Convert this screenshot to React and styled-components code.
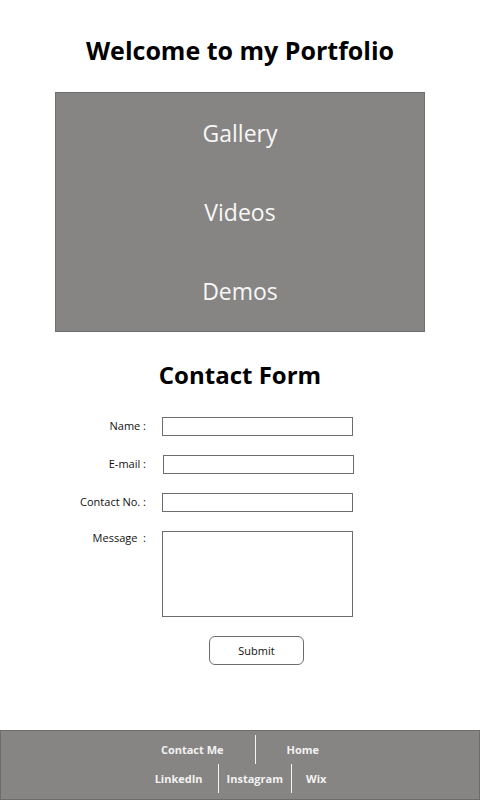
import React from 'react'
import styled, { createGlobalStyle } from 'styled-components'

const GlobalStyle = createGlobalStyle`
  html, body {
    margin: 0;
    padding: 0;
    background: #fff;
  }
  body {
    font-family: "Open Sans", "Noto Sans", sans-serif;
  }
`

const menuItems = ['Gallery', 'Videos', 'Demos']

const fields = [
    { label: 'Name :', name: 'name' },
    { label: 'E-mail :', name: 'email', shift: 1 },
    { label: 'Contact No. :', name: 'contact' },
]

const App = () => {
    return (
        <>
            <GlobalStyle />
            <Page>
                <Title>Welcome to my Portfolio</Title>
                <MenuBox>
                    {menuItems.map(item => (
                        <MenuItem key={item}>{item}</MenuItem>
                    ))}
                </MenuBox>

                <SubTitle>Contact Form</SubTitle>
                <Form onSubmit={e => e.preventDefault()}>
                    {fields.map(f => (
                        <React.Fragment key={f.name}>
                            <Label htmlFor={f.name}>{f.label}</Label>
                            <Input id={f.name} type="text" shift={f.shift} />
                        </React.Fragment>
                    ))}
                    <Label htmlFor="message" top>Message&nbsp;&nbsp;:</Label>
                    <TextArea id="message" />
                    <ButtonCell>
                        <SubmitButton type="submit">Submit</SubmitButton>
                    </ButtonCell>
                </Form>

                <Footer>
                    <FooterRow>
                        <FooterLink pad={31}>Contact Me</FooterLink>
                        <FooterLink pad={31} divider>Home</FooterLink>
                    </FooterRow>
                    <FooterRow>
                        <FooterLink pad={15}>LinkedIn</FooterLink>
                        <FooterLink pad={8} divider>Instagram</FooterLink>
                        <FooterLink pad={14} divider>Wix</FooterLink>
                    </FooterRow>
                </Footer>
            </Page>
        </>
    )
}

const Page = styled.div`
    min-height: 800px;
    display: flex;
    flex-direction: column;
    align-items: center;
`
const Title = styled.h1`
    margin: 34px 0 0;
    font-size: 25px;
    line-height: 32px;
    font-weight: 700;
    color: #000;
`
const MenuBox = styled.nav`
    margin-top: 26px;
    width: 370px;
    box-sizing: border-box;
    background: #878583;
    border: 1px solid #6f6f6f;
    display: flex;
    flex-direction: column;
`
const MenuItem = styled.div`
    height: 80px;
    display: flex;
    align-items: center;
    justify-content: center;
    font-size: 23px;
    color: #f7f7f7;
    margin-top: -1px;
    &:first-child{
        margin-top: 0;
    }
`
const SubTitle = styled.h2`
    margin: 27px 0 0;
    font-size: 24px;
    line-height: 32px;
    font-weight: 700;
    color: #000;
`
const Form = styled.form`
    align-self: flex-start;
    margin: 26px 0 0 56px;
    display: grid;
    grid-template-columns: 90px 191px;
    column-gap: 16px;
    row-gap: 19px;
`
const Label = styled.label`
    font-size: 11px;
    line-height: 13px;
    color: #111;
    text-align: right;
    align-self: ${({top}) => (top ? 'start' : 'center')};
    margin-top: ${({top}) => (top ? '0' : '-2px')};
    white-space: nowrap;
`
const Input = styled.input`
    box-sizing: border-box;
    width: 191px;
    height: 19px;
    margin: 0 0 0 ${({shift}) => (shift ? `${shift}px` : '0')};
    padding: 0 4px;
    border: 1px solid #6d6d6d;
    border-radius: 0;
    background: #fff;
    outline: none;
`
const TextArea = styled.textarea`
    box-sizing: border-box;
    width: 191px;
    height: 86px;
    margin: 0;
    padding: 4px;
    border: 1px solid #6d6d6d;
    border-radius: 0;
    resize: none;
    outline: none;
`
const ButtonCell = styled.div`
    grid-column: 2;
    display: flex;
    justify-content: center;
`
const SubmitButton = styled.button`
    width: 95px;
    height: 29px;
    margin-right: 2px;
    background: #fff;
    border: 1px solid #6d6d6d;
    border-radius: 6px;
    font-family: "Open Sans", "Noto Sans", sans-serif;
    font-size: 11px;
    color: #111;
    cursor: pointer;
`
const Footer = styled.footer`
    margin-top: auto;
    width: 100%;
    height: 70px;
    box-sizing: border-box;
    background: #878583;
    border: 1px solid #6d6d6d;
    padding-top: 4px;
    display: flex;
    flex-direction: column;
    align-items: center;
`
const FooterRow = styled.div`
    display: flex;
    height: 29px;
`
const FooterLink = styled.a`
    display: flex;
    align-items: center;
    padding: 0 ${({pad}) => pad}px;
    border-left: ${({divider}) => (divider ? '1px solid #f4f4f4' : 'none')};
    font-size: 11px;
    font-weight: 700;
    color: #f2f2f2;
    cursor: pointer;
`
export default App
